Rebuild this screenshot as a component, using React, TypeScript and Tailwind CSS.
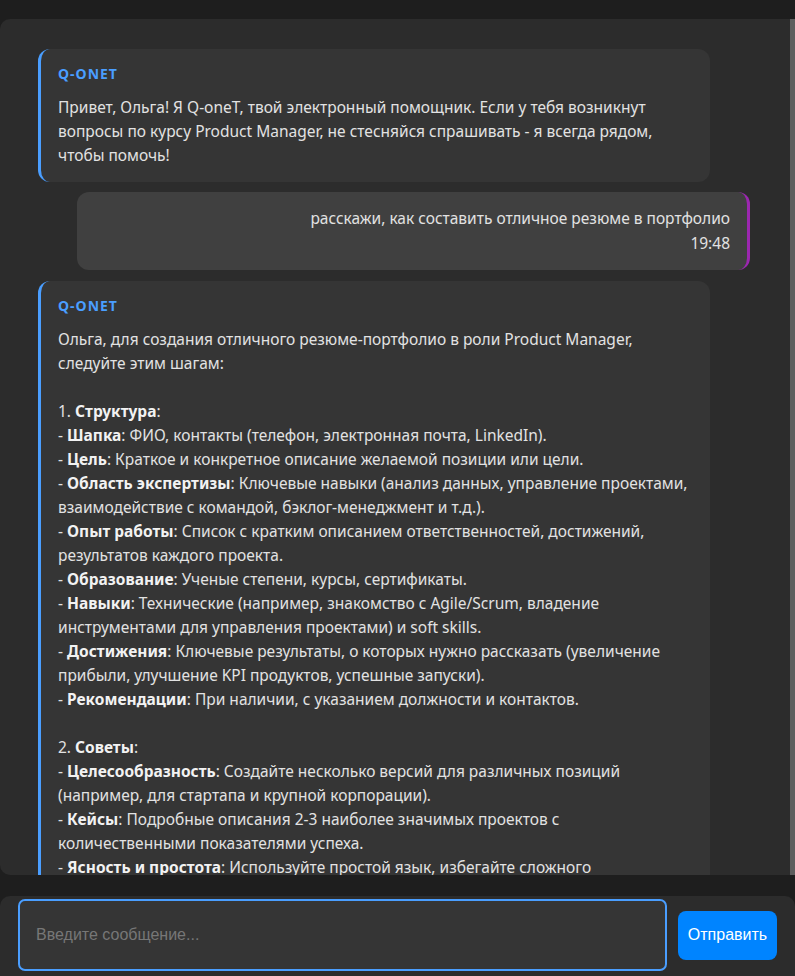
import React from "react";

type Seg = string | { b: string };
type Line = Seg[];

const greeting: string[] = [
  "Привет, Ольга! Я Q-oneT, твой электронный помощник. Если у тебя возникнут",
  "вопросы по курсу Product Manager, не стесняйся спрашивать - я всегда рядом,",
  "чтобы помочь!",
];

const answer: Line[] = [
  ["Ольга, для создания отличного резюме-портфолио в роли Product Manager,"],
  ["следуйте этим шагам:"],
  [],
  ["1. ", { b: "Структура" }, ":"],
  ["- ", { b: "Шапка" }, ": ФИО, контакты (телефон, электронная почта, LinkedIn)."],
  ["- ", { b: "Цель" }, ": Краткое и конкретное описание желаемой позиции или цели."],
  ["- ", { b: "Область экспертизы" }, ": Ключевые навыки (анализ данных, управление проектами,"],
  ["взаимодействие с командой, бэклог-менеджмент и т.д.)."],
  ["- ", { b: "Опыт работы" }, ": Список с кратким описанием ответственностей, достижений,"],
  ["результатов каждого проекта."],
  ["- ", { b: "Образование" }, ": Ученые степени, курсы, сертификаты."],
  ["- ", { b: "Навыки" }, ": Технические (например, знакомство с Agile/Scrum, владение"],
  ["инструментами для управления проектами) и soft skills."],
  ["- ", { b: "Достижения" }, ": Ключевые результаты, о которых нужно рассказать (увеличение"],
  ["прибыли, улучшение KPI продуктов, успешные запуски)."],
  ["- ", { b: "Рекомендации" }, ": При наличии, с указанием должности и контактов."],
  [],
  ["2. ", { b: "Советы" }, ":"],
  ["- ", { b: "Целесообразность" }, ": Создайте несколько версий для различных позиций"],
  ["(например, для стартапа и крупной корпорации)."],
  ["- ", { b: "Кейсы" }, ": Подробные описания 2-3 наиболее значимых проектов с"],
  ["количественными показателями успеха."],
  ["- ", { b: "Ясность и простота" }, ": Используйте простой язык, избегайте сложного"],
  ["жаргона."],
  ["- ", { b: "Визуальное оформление" }, ": Четкая структура, единый стиль."],
];

function BotBubble({ children, className }: { children: React.ReactNode; className?: string }) {
  return (
    <div
      className={
        "ml-[38px] w-[672px] shrink-0 rounded-[12px] border-l-[3px] border-[#4a9eff] bg-[#353535] pb-[15px] pl-[17px] pr-[16px] pt-[15px] " +
        (className ?? "")
      }
    >
      <div className="mb-[11px] text-[14px] font-bold leading-[20px] tracking-[1px] text-[#4a9eff]">Q-ONET</div>
      <div className="whitespace-nowrap text-[15.5px] leading-[24px] text-[#e2e2e2]">{children}</div>
    </div>
  );
}

export default function App() {
  return (
    <div
      className="flex h-[976px] w-full flex-col overflow-hidden bg-[#1e1e1e] pt-[19px]"
      style={{ fontFamily: '"Noto Sans", sans-serif' }}
    >
      <div className="flex h-[856px] shrink-0 overflow-hidden rounded-l-[10px] bg-[#2c2c2c]">
        <div className="flex min-w-0 flex-1 flex-col overflow-hidden pt-[30px]">
          <BotBubble>
            {greeting.map((l, i) => (
              <div key={i}>{l}</div>
            ))}
          </BotBubble>

          <div className="ml-[77px] mt-[10px] w-[673px] shrink-0 rounded-[12px] border-r-[3px] border-[#9c27b0] bg-[#404040] pb-[15px] pl-[17px] pr-[17px] pt-[14px] text-right text-[15.5px] leading-[24px] text-[#e2e2e2]">
            <div>расскажи, как составить отличное резюме в портфолио</div>
            <div className="mt-[1px]">19:48</div>
          </div>

          <BotBubble className="mt-[11px]">
            {answer.map((line, i) => (
              <div key={i} className="h-[24px]">
                {line.map((s, j) =>
                  typeof s === "string" ? (
                    <span key={j}>{s}</span>
                  ) : (
                    <strong key={j} className="font-bold text-[#f2f2f2]">
                      {s.b}
                    </strong>
                  )
                )}
              </div>
            ))}
          </BotBubble>
        </div>
        <div className="w-[5px] shrink-0 bg-[#5e5e5e]" />
      </div>

      <div className="mt-[21px] flex h-[80px] shrink-0 items-start rounded-t-[10px] bg-[#2c2c2c] pl-[18px] pr-[18px] pt-[3px]">
        <div className="flex w-full items-center gap-[11px]">
          <input
            placeholder="Введите сообщение..."
            className="h-[72px] w-[649px] rounded-[7px] border-2 border-[#4a9eff] bg-[#353535] px-[16px] text-[16px] text-[#e2e2e2] outline-none placeholder:text-[#777777]"
            style={{ fontFamily: '"Liberation Sans", Arial, sans-serif' }}
          />
          <button
            className="h-[49px] w-[99px] rounded-[8px] bg-[#0084ff] text-[16px] text-white"
            style={{ fontFamily: '"Liberation Sans", Arial, sans-serif' }}
          >
            Отправить
          </button>
        </div>
      </div>
    </div>
  );
}
